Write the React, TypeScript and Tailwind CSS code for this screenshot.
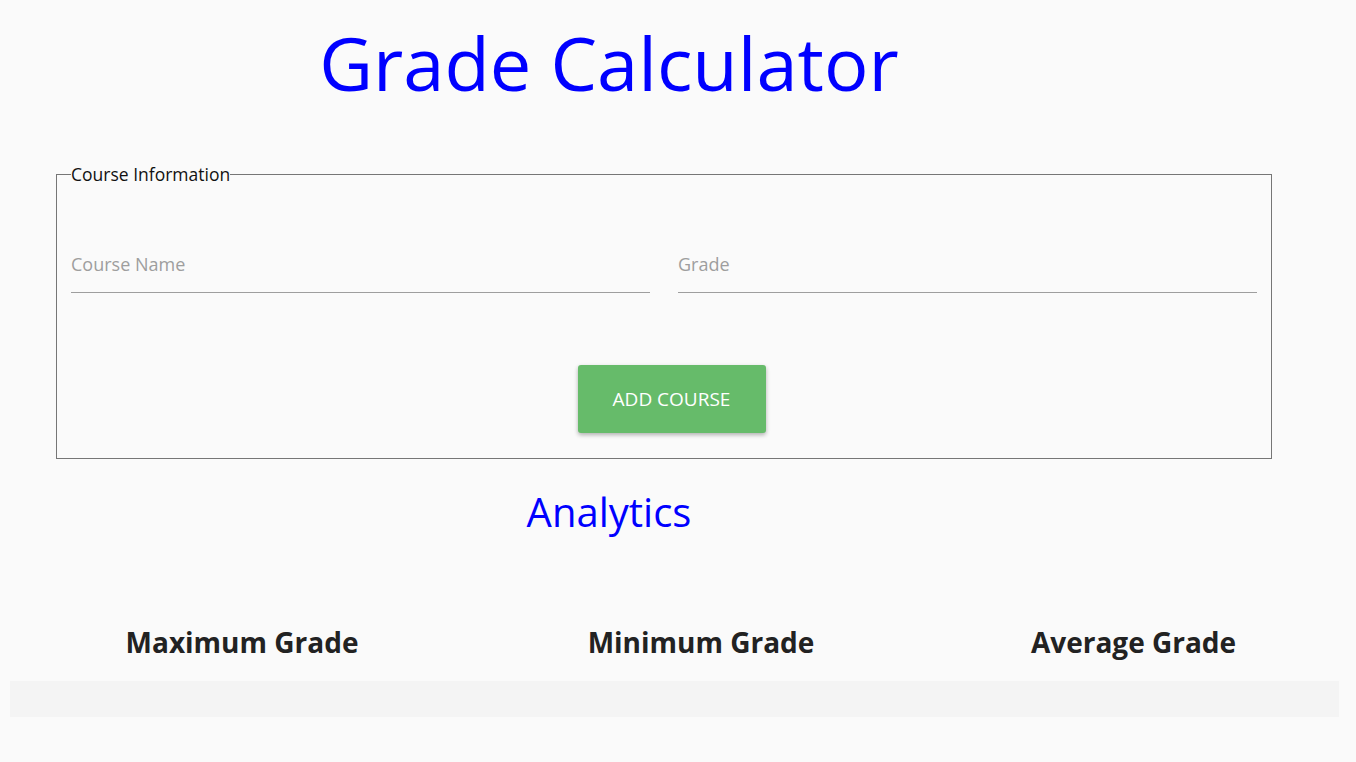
export default function App() {
  return (
    <div
      className="min-h-[762px] bg-[#fafafa] pb-10"
      style={{ fontFamily: '"Open Sans", "Noto Sans", sans-serif' }}
    >
      <div className="w-[1218px]">
        <h1 className="pt-[8px] text-center text-[74px] leading-[110px] text-[#0000ff]">
          Grade Calculator
        </h1>
      </div>

      <fieldset className="ml-[56px] mt-[45px] h-[296px] w-[1216px] border border-[#767676] px-[14px]">
        <legend className="text-[17.5px] leading-[22px] text-[#111]">Course Information</legend>
        <div className="mt-[67px] grid grid-cols-2 gap-[28px]">
          <div className="border-b border-[#9e9e9e] pb-[15px] leading-[24px]">
            <span className="text-[18px] text-[#9e9e9e]">Course Name</span>
          </div>
          <div className="border-b border-[#9e9e9e] pb-[15px] leading-[24px]">
            <span className="text-[18px] text-[#9e9e9e]">Grade</span>
          </div>
        </div>
        <div className="mt-[72px] flex justify-center pl-[15px]">
          <button className="h-[68px] w-[188px] rounded-[3px] bg-[#66bb6a] text-[19px] text-white shadow-[0_2px_4px_rgba(0,0,0,0.3)]">
            ADD COURSE
          </button>
        </div>
      </fieldset>

      <div className="w-[1218px]">
        <h2 className="mt-[27px] text-center text-[40px] leading-[52px] text-[#0000ff]">Analytics</h2>
      </div>

      <div className="mx-[10px] mt-[84px] grid grid-cols-[464px_454px_411px] text-center">
        <div className="text-[28px] font-bold leading-[40px] text-[#222]">Maximum Grade</div>
        <div className="text-[28px] font-bold leading-[40px] text-[#222]">Minimum Grade</div>
        <div className="text-[28px] font-bold leading-[40px] text-[#222]">Average Grade</div>
      </div>
      <div className="mx-[10px] mt-[19px] h-[36px] w-[1329px] bg-[#f4f4f4]" />
    </div>
  )
}
